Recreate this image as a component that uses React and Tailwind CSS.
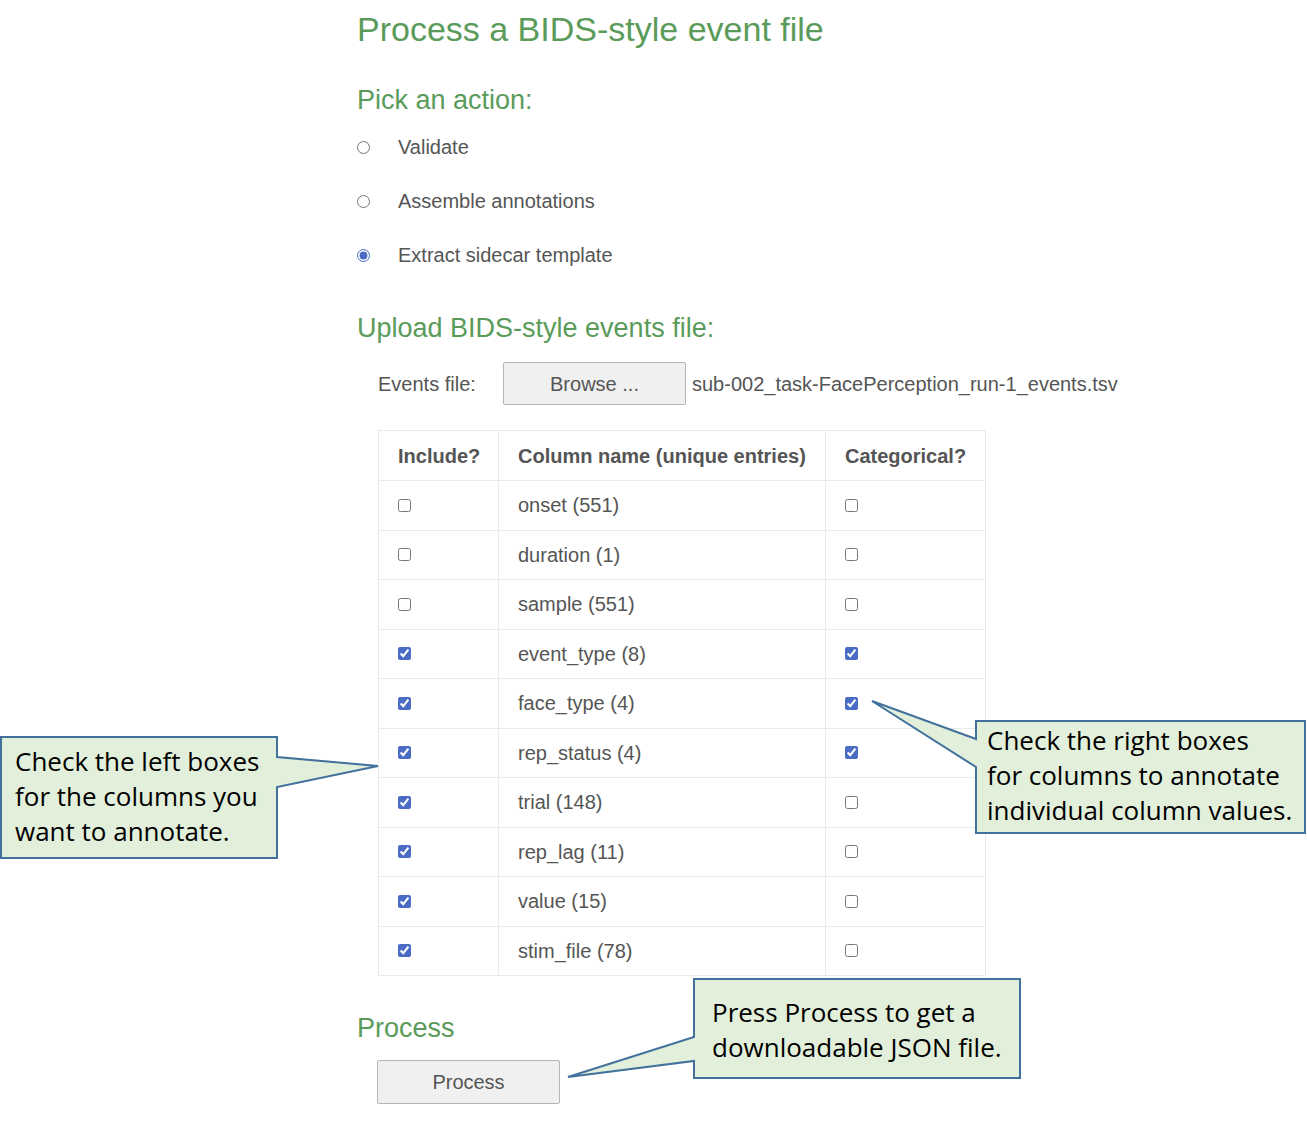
import React from "react";

const rows = [
  { name: "onset (551)", inc: false, cat: false },
  { name: "duration (1)", inc: false, cat: false },
  { name: "sample (551)", inc: false, cat: false },
  { name: "event_type (8)", inc: true, cat: true },
  { name: "face_type (4)", inc: true, cat: true },
  { name: "rep_status (4)", inc: true, cat: true },
  { name: "trial (148)", inc: true, cat: false },
  { name: "rep_lag (11)", inc: true, cat: false },
  { name: "value (15)", inc: true, cat: false },
  { name: "stim_file (78)", inc: true, cat: false },
];

const actions = [
  { label: "Validate", checked: false },
  { label: "Assemble annotations", checked: false },
  { label: "Extract sidecar template", checked: true },
];

// Callout drawn as one svg outline (box + pointer), with the text laid over it
function Callout({ left, top, width, height, points, textClass, children }) {
  return (
    <div className="absolute" style={{ left, top, width, height }}>
      <svg className="absolute left-0 top-0 overflow-visible" width={width} height={height}>
        <polygon points={points} fill="#e2efda" stroke="#41719c" strokeWidth="2" strokeLinejoin="miter" />
      </svg>
      <div className={"relative text-black " + textClass} style={{ fontFamily: '"Open Sans", sans-serif' }}>
        {children}
      </div>
    </div>
  );
}

export default function App() {
  return (
    <div className="relative w-[1307px] h-[1126px] bg-white overflow-hidden" style={{ fontFamily: '"Liberation Sans", Arial, sans-serif' }}>
      <div className="ml-[357px] pt-[10px] text-[#555]">
        <h1 className="text-[34px] leading-[38px] text-[#5a9b5a]">Process a BIDS-style event file</h1>

        <h2 className="mt-[36px] text-[27px] leading-[32px] text-[#5a9b5a]">Pick an action:</h2>
        <div className="mt-[4px] flex flex-col">
          {actions.map((a) => (
            <label key={a.label} className="flex items-center h-[54px] text-[20px]">
              <input
                type="radio"
                name="action"
                defaultChecked={a.checked}
                className="w-[13px] h-[13px] m-0 accent-[#4a6cc4]"
              />
              <span className="ml-[28px]">{a.label}</span>
            </label>
          ))}
        </div>

        <h2 className="mt-[30px] text-[27px] leading-[32px] text-[#5a9b5a]">Upload BIDS-style events file:</h2>

        <div className="mt-[18px] ml-[21px] flex items-center text-[20px]">
          <span className="w-[125px]">Events file:</span>
          <button className="w-[183px] h-[43px] bg-[#f0f0f0] border border-[#b5b5b5] rounded-[2px] text-[#555] text-[20px]">
            Browse ...
          </button>
          <span className="ml-[6px]">sub-002_task-FacePerception_run-1_events.tsv</span>
        </div>

        <table className="mt-[25px] ml-[21px] w-[607px] table-fixed border-collapse text-[20px] border border-[#e6e6e6]">
          <thead>
            <tr className="h-[50px]">
              <th className="w-[120px] px-[19px] text-left font-bold border border-[#eaeaea]">Include?</th>
              <th className="w-[327px] px-[19px] text-left font-bold border border-[#eaeaea]">Column name (unique entries)</th>
              <th className="w-[160px] px-[19px] text-left font-bold border border-[#eaeaea]">Categorical?</th>
            </tr>
          </thead>
          <tbody>
            {rows.map((r) => (
              <tr key={r.name} className="h-[49.5px]">
                <td className="px-[19px] border border-[#eaeaea]">
                  <input type="checkbox" defaultChecked={r.inc} className="block w-[13px] h-[13px] m-0 accent-[#4a6cc4]" />
                </td>
                <td className="px-[19px] border border-[#eaeaea]">{r.name}</td>
                <td className="px-[19px] border border-[#eaeaea]">
                  <input type="checkbox" defaultChecked={r.cat} className="block w-[13px] h-[13px] m-0 accent-[#4a6cc4]" />
                </td>
              </tr>
            ))}
          </tbody>
        </table>

        <h2 className="mt-[36px] text-[27px] leading-[32px] text-[#5a9b5a]">Process</h2>
        <button className="mt-[16px] ml-[20px] w-[183px] h-[44px] bg-[#f0f0f0] border border-[#b5b5b5] rounded-[2px] text-[#555] text-[20px]">
          Process
        </button>
      </div>

      {/* left callout */}
      <Callout
        left={1}
        top={737}
        width={276}
        height={121}
        points="0,0 276,0 276,20 377,29 276,50 276,121 0,121"
        textClass="pl-[14px] pt-[7px] text-[26px] leading-[35px]"
      >
        <div>Check the left boxes</div>
        <div>for the columns you</div>
        <div>want to annotate.</div>
      </Callout>

      {/* right callout */}
      <Callout
        left={976}
        top={721}
        width={329}
        height={112}
        points="0,0 329,0 329,112 0,112 0,46 -104,-20 0,18"
        textClass="pl-[11px] pt-[2px] text-[26px] leading-[35px]"
      >
        <div>Check the right boxes</div>
        <div>for columns to annotate</div>
        <div>individual column values.</div>
      </Callout>

      {/* bottom callout */}
      <Callout
        left={694}
        top={979}
        width={326}
        height={99}
        points="0,0 326,0 326,99 0,99 0,82 -126,98 0,58"
        textClass="pl-[18px] pt-[16px] text-[26px] leading-[35px]"
      >
        <div>Press Process to get a</div>
        <div>downloadable JSON file.</div>
      </Callout>
    </div>
  );
}
